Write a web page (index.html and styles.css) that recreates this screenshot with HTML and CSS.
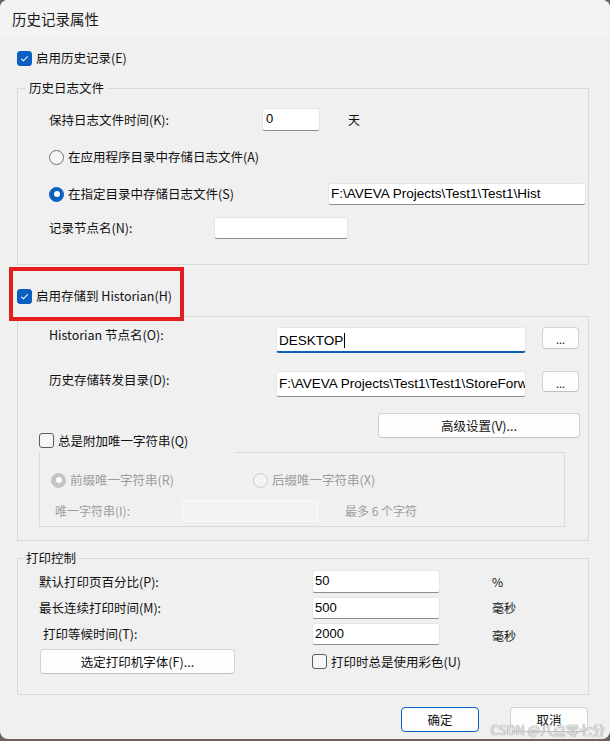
FILE: index.html
```html
<!DOCTYPE html>
<html lang="zh-CN">
<head>
<meta charset="utf-8">
<title>历史记录属性</title>
<link rel="stylesheet" href="styles.css">
</head>
<body>
<div class="dlg">
  <div class="titlebar">历史记录属性</div>
  <div class="content">
    <div class="chk chk-top"><span class="box on"><svg viewBox="0 0 15 15"><polyline points="3.8,7.8 6.3,10.1 11.2,5"/></svg></span><span>启用历史记录(E)</span></div>

    <div class="group g1">
      <div class="gtitle">历史日志文件</div>
      <div class="row r-keep">
        <span class="lbl w-keep">保持日志文件时间(K):</span>
        <span class="edit e-days">0</span>
        <span class="unit u-days">天</span>
      </div>
      <div class="row r-rad1"><span class="radio"></span><span>在应用程序目录中存储日志文件(A)</span></div>
      <div class="row r-rad2"><span class="radio on"></span><span class="w-rad2">在指定目录中存储日志文件(S)</span><span class="edit e-path">F:\AVEVA Projects\Test1\Test1\Hist</span></div>
      <div class="row r-node"><span class="lbl w-node">记录节点名(N):</span><span class="edit e-node"></span></div>
    </div>

    <div class="annot">
      <div class="chk"><span class="box on"><svg viewBox="0 0 15 15"><polyline points="3.8,7.8 6.3,10.1 11.2,5"/></svg></span><span>启用存储到 Historian(H)</span></div>
    </div>

    <div class="group g2">
      <div class="row r-hnode">
        <span class="lbl w-hist">Historian 节点名(O):</span>
        <span class="edit e-hist focus">DESKTOP<span class="caret"></span></span>
        <span class="btn b-dots">...</span>
      </div>
      <div class="row r-fwd">
        <span class="lbl w-hist">历史存储转发目录(D):</span>
        <span class="edit e-hist">F:\AVEVA Projects\Test1\Test1\StoreForward</span>
        <span class="btn b-dots b-dots2">...</span>
      </div>
      <div class="row r-adv">
        <div class="chk chk-uniq"><span class="box"></span><span>总是附加唯一字符串(Q)</span></div>
        <span class="btn b-adv">高级设置(V)...</span>
      </div>
      <div class="group g-inner">
        <div class="row r-pre">
          <span class="radio dis on"></span><span class="dtext w-pre">前缀唯一字符串(R)</span>
          <span class="radio dis"></span><span class="dtext">后缀唯一字符串(X)</span>
        </div>
        <div class="row r-uniq">
          <span class="dtext w-uniq">唯一字符串(I):</span>
          <span class="edit e-uniq"></span>
          <span class="dtext u-max">最多 6 个字符</span>
        </div>
      </div>
    </div>

    <div class="group g3">
      <div class="gtitle gt3">打印控制</div>
      <div class="row r-p r-p1">
        <span class="lbl w-print">默认打印页百分比(P):</span>
        <span class="edit e-print h23">50</span>
        <span class="unit u-print">%</span>
      </div>
      <div class="row r-p">
        <span class="lbl w-print">最长连续打印时间(M):</span>
        <span class="edit e-print">500</span>
        <span class="unit u-print">毫秒</span>
      </div>
      <div class="row r-p">
        <span class="lbl w-print ind">打印等候时间(T):</span>
        <span class="edit e-print">2000</span>
        <span class="unit u-print u-low">毫秒</span>
      </div>
      <div class="row r-p r-font">
        <span class="btn b-font">选定打印机字体(F)...</span>
        <div class="chk chk-color"><span class="box"></span><span>打印时总是使用彩色(U)</span></div>
      </div>
    </div>

    <div class="footer">
      <span class="btn b-main b-ok">确定</span>
      <span class="btn b-main">取消</span>
    </div>
  </div>
  <div class="watermark">CSDN @八点零七分</div>
</div>
</body>
</html>
```
FILE: styles.css
```css
* { box-sizing: border-box; margin: 0; padding: 0; }
html, body { width: 610px; height: 741px; overflow: hidden; }
body {
  background: #6e625c;
  font-family: "Noto Sans CJK SC", "Liberation Sans", sans-serif;
  font-size: 12.5px;
  line-height: 16px;
  color: #111;
}
.dlg {
  width: 610px;
  height: 739px;
  background: #f0f0f0;
  border-radius: 8px;
  position: relative;
  overflow: hidden;
}
.titlebar {
  height: 37px;
  background: #f3f3f3;
  padding-left: 12px;
  font-size: 14.5px;
  line-height: 37px;
  color: #1a1a1a;
}
.content { padding-left: 17px; }

/* checkbox */
.chk { display: flex; align-items: center; gap: 4px; height: 20px; white-space: nowrap; }
.box {
  width: 15px; height: 15px; flex: none;
  border: 1px solid #5c5c5c; border-radius: 3px; background: #f6f6f6;
  display: block;
}
.box.on { background: #0b5fc0; border-color: #0b5fc0; }
.box svg { width: 13px; height: 13px; display: block; }
.box polyline { fill: none; stroke: #fff; stroke-width: 1.2; }
.chk-top { margin-top: 11px; }

/* radio */
.radio {
  width: 15px; height: 15px; flex: none; border-radius: 50%;
  border: 1px solid #6f6f6f; background: #f6f6f6; margin-right: 4px;
  position: relative;
}
.radio.on { background: #0b5fc0; border-color: #0b5fc0; }
.radio.on::after {
  content: ""; position: absolute; left: 3.5px; top: 3.5px;
  width: 6px; height: 6px; border-radius: 50%; background: #fff;
}
.radio.dis { border-color: #cbcbcb; background: #f4f4f4; }
.radio.dis.on { background: #c4c4c4; border-color: #c4c4c4; }

/* groups */
.group { border: 1px solid #dadada; width: 572px; }
.gtitle {
  width: fit-content; margin: -9px 0 0 8px; padding: 0 3px;
  background: #f0f0f0; line-height: 16px; white-space: nowrap;
}
.gt3 { margin-left: 5px; }

.row { display: flex; align-items: center; white-space: nowrap; }
.lbl { flex: none; }

/* edits */
.edit {
  display: block; flex: none; background: #fff;
  border: 1px solid #e6e6e6; border-bottom-color: #8d8d8d; border-radius: 3px;
  font-family: "Liberation Sans", sans-serif; font-size: 13.5px; color: #000;
  padding-left: 2px; overflow: hidden; white-space: nowrap;
  height: 22px; line-height: 20px;
}
.edit.focus { border-bottom: 2px solid #0a5fb6; line-height: 21px; }
.caret { display: inline-block; width: 1px; height: 15px; background: #000; vertical-align: -3px; margin-left: 1px; }

/* buttons */
.btn {
  display: flex; align-items: center; justify-content: center; flex: none;
  background: #fdfdfd; border: 1px solid #d3d3d3; border-bottom-color: #c2c2c2;
  border-radius: 4px; white-space: nowrap;
}

/* group 1 */
.g1 { margin-top: 20px; padding-bottom: 25px; }
.g1 .row { margin-left: 31px; }
.r-keep { margin-top: 12px; height: 23px; }
.w-keep { width: 213px; }
.e-days { width: 58px; height: 23px; padding-left: 3px; font-size: 13px; }
.unit { font-size: 12px; }
.u-days { margin-left: 28px; }
.r-rad1 { margin-top: 16px; height: 20px; }
.r-rad2 { margin-top: 16px; height: 22px; }
.w-rad2 { width: 260px; }
.e-path { width: 258px; }
.r-node { margin-top: 12px; height: 22px; }
.w-node { width: 165px; }
.e-node { width: 134px; }

/* annotation */
.annot {
  position: relative; z-index: 1;
  margin: 2px 0 0 -8px; width: 175px; height: 54px;
  border: 4px solid #e41e1e; background: #f0f0f0;
  padding: 15px 0 0 4px;
}

/* group 2 */
.g2 { margin-top: -5px; padding-bottom: 13px; }
.r-hnode, .r-fwd { margin-left: 31px; align-items: flex-start; height: 26px; }
.r-hnode { margin-top: 10px; }
.r-fwd { margin-top: 18px; }
.r-fwd .lbl { margin-top: 1px; }
.w-hist { width: 227px; }
.e-hist { width: 250px; height: 26px; line-height: 24px; }
.e-hist.focus { line-height: 25px; }
.b-dots { width: 37px; height: 22px; margin-left: 16px; font-size: 11px; line-height: 10px; padding-top: 2px; }
.b-dots2 { height: 21px; }
.r-adv {
  margin: 16px 8px 0 21px; height: 40px;
  justify-content: space-between; align-items: flex-start;
}
.chk-uniq {
  align-self: flex-end; height: 22px; width: 196px;
  align-items: flex-start; padding-top: 2px;
  background: #f0f0f0; position: relative; z-index: 1;
}
.b-adv { width: 202px; height: 25px; }

.g-inner { width: 526px; margin: -1px 0 0 21px; padding-bottom: 4px; }
.dtext { color: #9c9c9c; }
.r-pre { margin: 17px 0 0 11px; height: 20px; }
.w-pre { width: 183px; }
.r-uniq { margin: 10px 0 0 15px; height: 22px; }
.w-uniq { width: 127px; font-size: 12px; }
.e-uniq { width: 136px; background: #f2f2f2; border: 1px solid #fbfbfb; }
.u-max { margin-left: 27px; font-size: 12px; }

/* group 3 */
.g3 { margin-top: 17px; padding-bottom: 20px; }
.r-p { margin: 4px 0 0 21px; height: 22px; }
.r-p1 { height: 23px; }
.h23 { height: 23px; }
.w-print { width: 273px; }
.ind { padding-left: 4px; }
.e-print { width: 128px; font-size: 13px; }
.u-print { margin-left: 52px; }
.u-low { padding-top: 3px; }
.r-font { height: 25px; }
.b-font { width: 195px; height: 25px; margin-left: 1px; }
.chk-color { margin-left: 77px; }

/* footer */
.footer { display: flex; justify-content: flex-end; gap: 31px; margin: 12px 22px 0 0; }
.b-main { width: 78px; height: 25px; }
.b-ok { border: 1px solid #0a63c4; }

.watermark {
  position: absolute; right: 5px; bottom: 1px;
  font-size: 13px; color: rgba(255, 255, 255, 0.8);
  text-shadow: 0 0 1px #8a8a8a, 0 0 1px #8a8a8a;
  white-space: nowrap;
}
```
